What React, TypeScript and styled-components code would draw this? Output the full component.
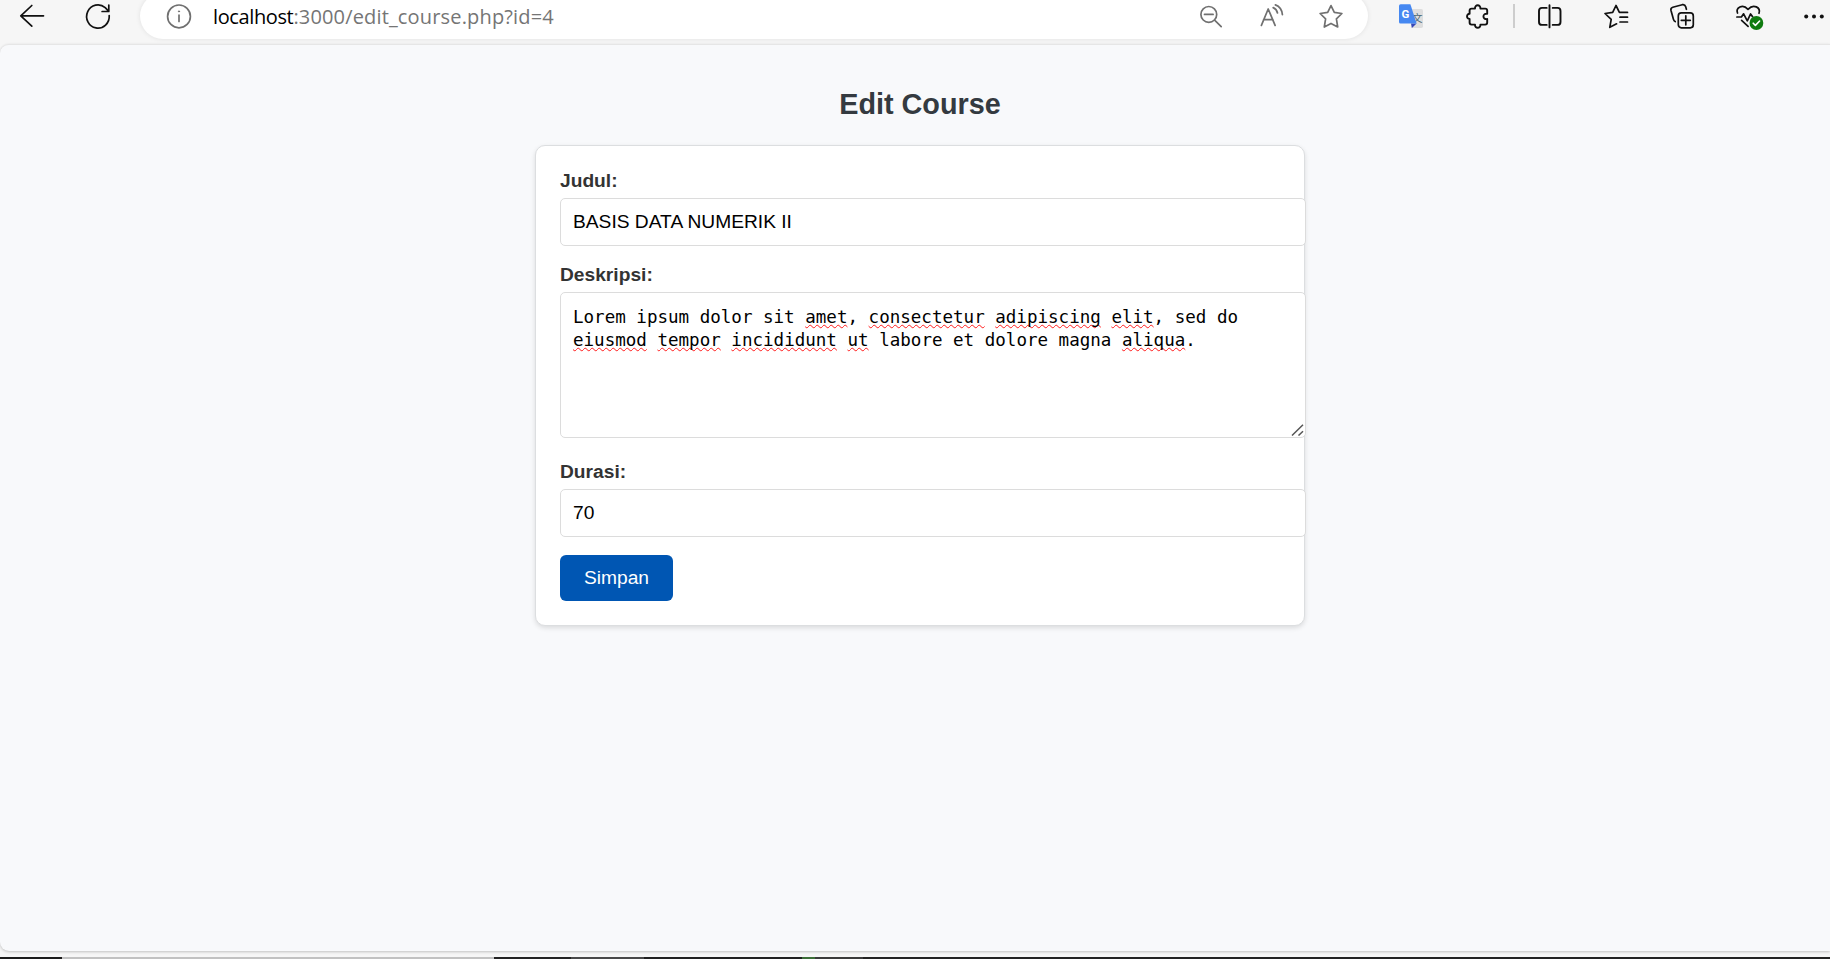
import React from "react";
import styled, { createGlobalStyle } from "styled-components";

const GlobalStyle = createGlobalStyle`
  *, *::before, *::after { box-sizing: border-box; }
  html, body { margin: 0; padding: 0; background: #f5f5f5; }
  body { font-family: Arial, "Liberation Sans", sans-serif; overflow: hidden; }
`;

const Window = styled.div`
  width: 100%;
  height: 959px;
  display: flex;
  flex-direction: column;
  background: #f6f6f6;
  overflow: hidden;
`;

const Toolbar = styled.header`
  flex: none;
  height: 44px;
  padding: 0 4px 12px 20px;
  display: flex;
  align-items: center;
`;

const IconButton = styled.span<{ $before?: number; $width?: number; $color?: string }>`
  flex: none;
  width: ${(p) => p.$width ?? 24}px;
  height: 24px;
  margin-left: ${(p) => p.$before ?? 0}px;
  color: ${(p) => p.$color ?? "#111"};

  svg {
    display: block;
    overflow: visible;
    width: 100%;
    height: 100%;
    fill: none;
    stroke: currentColor;
    stroke-width: 1.7;
    stroke-linecap: round;
    stroke-linejoin: round;
  }
`;

const AddressBar = styled.div`
  flex: none;
  width: 1228px;
  height: 46px;
  margin-left: 30px;
  padding: 0 25px 0 27px;
  display: flex;
  align-items: center;
  border-radius: 23px;
  background: #fff;
  box-shadow: 0 0 5px rgba(0, 0, 0, 0.09);
`;

const Url = styled.span`
  flex: 1;
  margin-left: 22px;
  padding-top: 2px;
  font: 20px/28px "Open Sans", "Noto Sans", sans-serif;
  letter-spacing: 0.16px;
  color: #757575;
  white-space: nowrap;
`;

const UrlHost = styled.span`
  letter-spacing: -0.38px;
  color: #000;
`;

const Separator = styled.span`
  flex: none;
  width: 2px;
  height: 24px;
  margin-left: 23px;
  background: #cdcdcd;
`;

const Page = styled.main`
  flex: 1;
  border-top: 1px solid #e6e6e6;
  border-radius: 9px 0 0 9px;
  background: #f8f9fb;
  box-shadow: 0 1px 3px rgba(0, 0, 0, 0.22);
  padding-left: 535px;
`;

const Column = styled.div`
  width: 770px;
`;

const Title = styled.h2`
  margin: 0;
  padding-top: 42px;
  height: 100px;
  font-size: 28.8px;
  line-height: 34px;
  font-weight: 700;
  text-align: center;
  color: #343a40;
`;

const Card = styled.form`
  height: 481px;
  padding: 24px;
  border: 1px solid #dcdee0;
  border-radius: 10px;
  background: #fff;
  box-shadow: 0 2px 5px rgba(0, 0, 0, 0.12);
`;

const Label = styled.label`
  display: block;
  height: 22px;
  margin-bottom: 6px;
  font-size: 19.2px;
  line-height: 22px;
  font-weight: 700;
  color: #333;
`;

const TextInput = styled.input`
  display: block;
  width: 746px;
  height: 48px;
  margin: 0 0 18px;
  padding: 0 12px;
  border: 1px solid #dcdcdc;
  border-radius: 5px;
  outline: none;
  background: #fff;
  font: 19.2px "Liberation Sans", Arial, sans-serif;
  color: #000;
`;

const DescriptionBox = styled.div`
  position: relative;
  width: 746px;
  height: 146px;
  margin-bottom: 23px;
  padding: 13px 12px 12px;
  border: 1px solid #dcdcdc;
  border-radius: 5px;
  background: #fff;
  font: 17.54px/23px "DejaVu Sans Mono", monospace;
  color: #000;
  white-space: pre-wrap;
`;

const Misspelled = styled.span`
  text-decoration: underline wavy #ff1a1a 1.35px;
  text-decoration-skip-ink: none;
  text-underline-offset: 1px;
`;

const ResizeGrip = styled.svg`
  position: absolute;
  right: 1px;
  bottom: 1px;
  width: 13px;
  height: 12px;
`;

const SaveButton = styled.button`
  display: block;
  width: 113px;
  height: 46px;
  padding: 0;
  border: 0;
  border-radius: 6px;
  background: #0056b3;
  font: 19.2px "Liberation Sans", Arial, sans-serif;
  color: #fff;
`;

const Taskbar = styled.footer`
  flex: none;
  height: 2px;
  margin-top: 6px;
  display: flex;
  background: #222;
`;

const TaskbarSegment = styled.span<{ $width: number; $color: string }>`
  width: ${(p) => p.$width}px;
  background: ${(p) => p.$color};
`;

const taskbarSegments = [
  { width: 62, color: "#1b1b1b" },
  { width: 432, color: "#c1c1c1" },
  { width: 77, color: "#222" },
  { width: 73, color: "#484848" },
  { width: 158, color: "#202020" },
  { width: 13, color: "#3c6e37" },
  { width: 48, color: "#3a3a3a" },
];

const description: Array<{ text: string; wrong?: boolean }> = [
  { text: "Lorem ipsum dolor sit " },
  { text: "amet", wrong: true },
  { text: ", " },
  { text: "consectetur", wrong: true },
  { text: " " },
  { text: "adipiscing", wrong: true },
  { text: " " },
  { text: "elit", wrong: true },
  { text: ", sed do " },
  { text: "eiusmod", wrong: true },
  { text: " " },
  { text: "tempor", wrong: true },
  { text: " " },
  { text: "incididunt", wrong: true },
  { text: " " },
  { text: "ut", wrong: true },
  { text: " labore et dolore magna " },
  { text: "aliqua", wrong: true },
  { text: "." },
];

const grey = "#707070";

function BrowserToolbar() {
  return (
    <Toolbar>
      <IconButton>
        <svg viewBox="0 0 24 24"><path d="M23.5 11.8H1M11.8 1.5L.8 11.8l11 10.4" /></svg>
      </IconButton>
      <IconButton $before={42}>
        <svg viewBox="0 0 24 24">
          <path d="M23.2 11.5A11.3 11.6 0 1 1 19.2 3.6L22.8 7.3M22.8 1v6.5h-6.7" />
        </svg>
      </IconButton>
      <AddressBar>
        <IconButton $color={grey}>
          <svg viewBox="0 0 24 24">
            <circle cx="12" cy="12.4" r="11.4" />
            <path d="M12 11v6.5" />
            <circle cx="12" cy="7.4" r=".6" fill="currentColor" strokeWidth="1" />
          </svg>
        </IconButton>
        <Url><UrlHost>localhost</UrlHost>:3000/edit_course.php?id=4</Url>
        <IconButton $color={grey}>
          <svg viewBox="0 0 24 24">
            <circle cx="9.8" cy="10.4" r="7.9" />
            <path d="M5.5 10.4h8.6M15.6 16.2l6.6 6.4" />
          </svg>
        </IconButton>
        <IconButton $before={37} $color={grey}>
          <svg viewBox="0 0 24 24">
            <path d="M1.4 21.4L8.2 5l6.9 16.4M3.6 15.6h9.3M13.2 3.6c2.2.9 3.7 2.7 4.3 5.4M15.4.9c4 1.5 6.5 4.8 7 9.7" />
          </svg>
        </IconButton>
        <IconButton $before={35} $color={grey}>
          <svg viewBox="0 0 24 24">
            <path d="M12 1.6l3.3 6.8 7.6 1.1-5.5 5.3 1.3 8.2L12 19.4 5.3 23l1.3-8.2L1.1 9.5l7.6-1.1z" />
          </svg>
        </IconButton>
      </AddressBar>
      <IconButton $before={31}>
        <svg viewBox="0 0 24 24">
          <g stroke="none">
            <path d="M9.5 5h12.7q1.8 0 1.8 1.8v15.4q0 1.8-1.8 1.8H12.6z" fill="#dedede" />
            <text x="13" y="18" fontSize="10.5" fontWeight="400" fontFamily="Noto Sans CJK SC, sans-serif" fill="#4d6975">文</text>
            <path d="M12 19.5h5.6L12.9 24z" fill="#3647b8" />
            <path d="M1.6.3h9.8l6.2 19.2H1.6Q0 19.5 0 17.9V1.9Q0 .3 1.6.3z" fill="#4688f1" />
            <text x="2.6" y="13.9" fontSize="11.5" fontWeight="700" fontFamily="Roboto, sans-serif" fill="#fff">G</text>
          </g>
        </svg>
      </IconButton>
      <IconButton $before={43}>
        <svg viewBox="0 0 24 24">
          <path strokeWidth="1.9" d="M5.6 4.6H9C8.6.2 14.8.2 14.4 4.6h4.8q2 0 2 2v3.2c-5-.9-5 6.1 0 5.2v3.6q0 2-2 2h-4.8c.4 4.2-5.8 4.2-5.4 0H5.6q-2 0-2-2V15c-3.4.2-3.4-5.4 0-5.2V6.6q0-2 2-2z" />
        </svg>
      </IconButton>
      <Separator />
      <IconButton $before={23}>
        <svg viewBox="0 0 24 24">
          <path strokeWidth="1.9" d="M8.7 3.9H4q-3 0-3 3v11q0 3 3 3h4.7M14.7 3.9h4.8q3 0 3 3v11q0 3-3 3h-4.8M11.5 1.2v22.2" />
        </svg>
      </IconButton>
      <IconButton $before={42}>
        <svg viewBox="0 0 24 24">
          <path d="M12.6 19.8l-6.8 3.5 1.4-8L1 9.5l7.7-1.1L12 1.5l3.4 6.9H23.5M16 13.2h7.5M16 18h7.5" />
        </svg>
      </IconButton>
      <IconButton $before={42}>
        <svg viewBox="0 0 24 24">
          <rect x="8.3" y="8.9" width="15" height="14.9" rx="3" />
          <path d="M15.8 11.8v9M11.3 16.3h9M5.2 17.6Q3.9 17 3.5 15.4L1 6.5Q.4 4 2.8 3.2L12.2.7q2.7-.6 3.5 2l.7 2.6" />
        </svg>
      </IconButton>
      <IconButton $before={42} $width={28}>
        <svg viewBox="0 0 28 24">
          <path d="M1.5 9C-.4 4.2 6.3-.8 12 5.3 17.7-.8 24.9 3.6 23 9.3M.9 13h4.5l2.2-3.2 3.7 7 3.3-6.9 2 2.8M5.6 16.4l6.5 6" />
          <circle cx="20.4" cy="19" r="6.9" fill="#0f7b0f" stroke="none" />
          <path stroke="#fff" strokeWidth="1.6" d="M17.2 19.2l2.2 2.2 4.2-4.4" />
        </svg>
      </IconButton>
      <IconButton $before={38}>
        <svg viewBox="0 0 24 24">
          <g fill="currentColor" stroke="none">
            <circle cx="4.2" cy="12.4" r="2" />
            <circle cx="12" cy="12.4" r="2" />
            <circle cx="19.8" cy="12.4" r="2" />
          </g>
        </svg>
      </IconButton>
    </Toolbar>
  );
}

export default function App() {
  return (
    <Window>
      <GlobalStyle />
      <BrowserToolbar />
      <Page>
        <Column>
          <Title>Edit Course</Title>
          <Card onSubmit={(e) => e.preventDefault()}>
            <Label htmlFor="judul">Judul:</Label>
            <TextInput id="judul" defaultValue="BASIS DATA NUMERIK II" />
            <Label>Deskripsi:</Label>
            <DescriptionBox>
              {description.map((part, i) =>
                part.wrong ? <Misspelled key={i}>{part.text}</Misspelled> : part.text
              )}
              <ResizeGrip viewBox="0 0 13 12" fill="none" stroke="#555" strokeWidth="1.5">
                <path d="M1 11.5L12 .8M7.5 11.5L12 7.2" />
              </ResizeGrip>
            </DescriptionBox>
            <Label htmlFor="durasi">Durasi:</Label>
            <TextInput id="durasi" defaultValue="70" />
            <SaveButton type="submit">Simpan</SaveButton>
          </Card>
        </Column>
      </Page>
      <Taskbar>
        {taskbarSegments.map((s, i) => (
          <TaskbarSegment key={i} $width={s.width} $color={s.color} />
        ))}
      </Taskbar>
    </Window>
  );
}
